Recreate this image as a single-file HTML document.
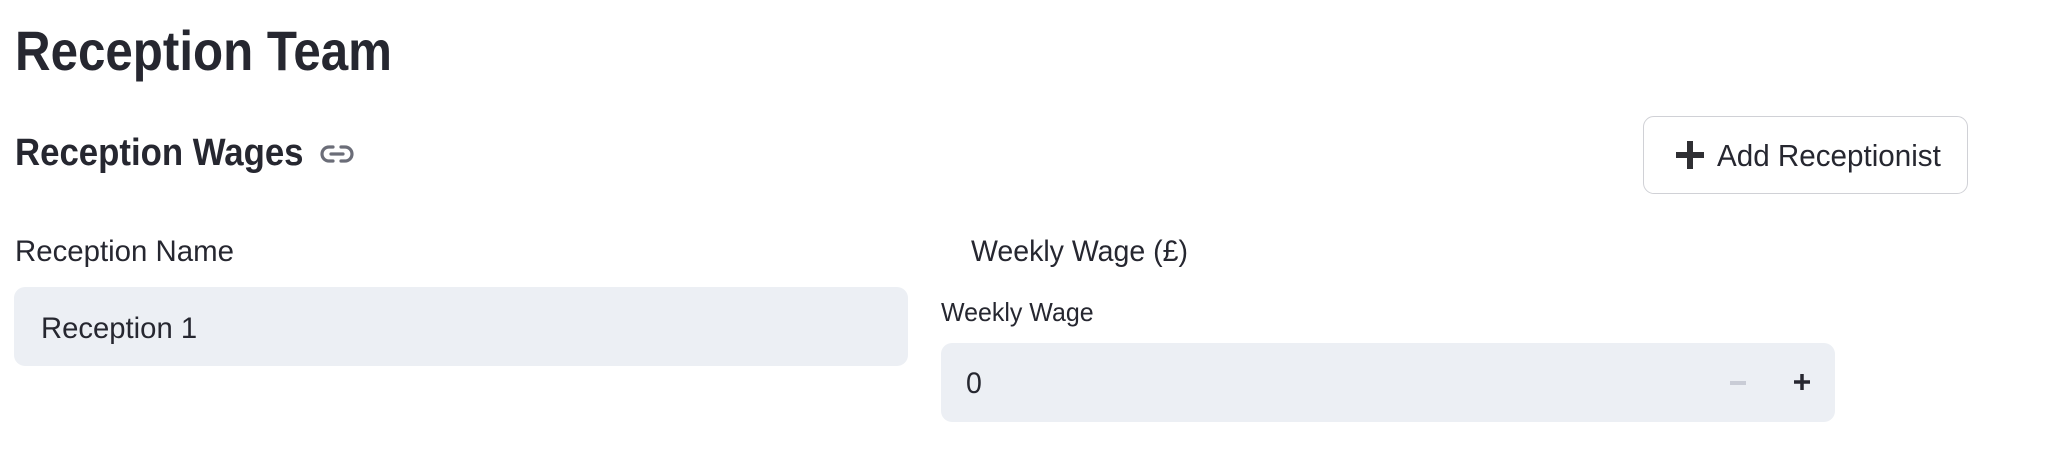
<!DOCTYPE html>
<html><head><meta charset="utf-8"><style>
body{margin:0;width:2064px;height:452px;background:#fff;position:relative;overflow:hidden;font-family:"Liberation Sans",sans-serif;color:#262730}
.a{position:absolute;white-space:nowrap;transform-origin:0 50%}
.inp{position:absolute;background:#eceff4;border-radius:11px}
</style></head><body>
<div class="a" style="left:15px;top:19px;font-size:56px;font-weight:bold;line-height:64px;transform:scaleX(0.88)">Reception Team</div>
<div class="a" style="left:15px;top:131px;font-size:38px;font-weight:bold;line-height:44px;transform:scaleX(0.915)">Reception Wages</div>
<svg class="a" style="left:320px;top:142px" width="34" height="24" viewBox="0 0 34 24"><g fill="none" stroke="#6b6d78" stroke-width="3.2" stroke-linecap="round"><path d="M13 5H9a7 7 0 0 0 0 14h4"/><path d="M21 5h4a7 7 0 0 1 0 14h-4"/><path d="M11 12h12"/></g></svg>
<div style="position:absolute;left:1643px;top:116px;width:325px;height:78px;border:1.5px solid #d0d1d6;border-radius:11px;box-sizing:border-box"></div>
<svg class="a" style="left:1675px;top:140px" width="30" height="30" viewBox="0 0 30 30"><path d="M15 1v28M1 15h28" stroke="#2f2f33" stroke-width="6"/></svg>
<div class="a" style="left:1717px;top:138px;font-size:31px;line-height:36px;transform:scaleX(0.955)">Add Receptionist</div>
<div class="a" style="left:15px;top:234px;font-size:30px;line-height:36px;transform:scaleX(0.98)">Reception Name</div>
<div class="inp" style="left:14px;top:287px;width:894px;height:79px"></div>
<div class="a" style="left:41px;top:311px;font-size:30px;line-height:36px;transform:scaleX(0.975)">Reception 1</div>
<div class="a" style="left:971px;top:234px;font-size:30px;line-height:36px;transform:scaleX(0.95)">Weekly Wage (£)</div>
<div class="a" style="left:941px;top:297px;font-size:26px;line-height:30px;transform:scaleX(0.96)">Weekly Wage</div>
<div class="inp" style="left:941px;top:343px;width:894px;height:79px"></div>
<div class="a" style="left:966px;top:366px;font-size:30px;line-height:36px;transform:scaleX(0.95)">0</div>
<div style="position:absolute;left:1730px;top:381px;width:16px;height:4px;background:#c9ccd6"></div>
<svg class="a" style="left:1793px;top:373px" width="18" height="18" viewBox="0 0 18 18"><path d="M9 1v16M1 9h16" stroke="#262730" stroke-width="3.5"/></svg>
</body></html>
